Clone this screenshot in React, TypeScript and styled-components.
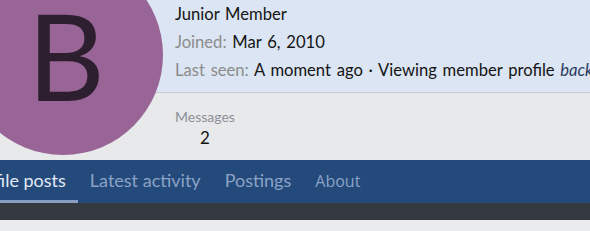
import styled, { createGlobalStyle } from 'styled-components';

const GlobalStyle = createGlobalStyle`
  html, body {
    margin: 0;
    padding: 0;
    background: #ebecee;
    font-family: Lato, "Noto Sans", sans-serif;
    overflow: hidden;
  }
`;

const Page = styled.div`
  width: 590px;
  height: 231px;
  overflow: hidden;
  background: #ebecee;
`;

const Header = styled.div`
  display: grid;
  grid-template-columns: 175px 1fr;
  grid-template-rows: auto auto;
  background: #e8e9eb;
`;

const InfoBand = styled.div`
  grid-column: 1 / -1;
  grid-row: 1;
  background: #dbe5f3;
  border-bottom: 1px solid #c9cdd3;
  padding: 0 0 8px 175px;
  white-space: nowrap;
`;

const StatsBand = styled.div`
  grid-column: 1 / -1;
  grid-row: 2;
  height: 67px;
  padding: 15px 0 0 175px;
  box-sizing: border-box;
  display: flex;
  gap: 24px;
`;

const Avatar = styled.div`
  grid-column: 1;
  grid-row: 1 / 3;
  align-self: start;
  z-index: 1;
  width: 200px;
  height: 200px;
  margin: -45px 0 0 -37px;
  padding-left: 6px;
  box-sizing: border-box;
  border-radius: 50%;
  background: #996596;
  color: #2e1f30;
  display: flex;
  align-items: center;
  justify-content: center;
  font-size: 120px;
  line-height: 1;
`;

const Line = styled.div`
  font-size: 16.6px;
  line-height: 28px;
  word-spacing: 1.5px;
  color: #141414;
`;

const Label = styled.span`
  color: #8c8c8c;
`;

const Em = styled.em`
  color: #2a3b62;
`;

const Stat = styled.dl`
  margin: 0;
  text-align: center;
`;

const StatTitle = styled.dt`
  font-size: 14px;
  line-height: 18px;
  color: #8c9097;
`;

const StatValue = styled.dd`
  margin: 1px 0 0;
  font-size: 17px;
  line-height: 22px;
  color: #141414;
`;

const Tabs = styled.nav`
  display: flex;
  height: 43px;
  margin-left: -44px;
  background: #244a7b;
`;

const Tab = styled.a<{ $active?: boolean; $alt?: boolean }>`
  display: block;
  padding: ${(p) => (p.$alt ? '9px 12px 0' : '8px 12px 0')};
  font-size: ${(p) => (p.$alt ? '16px' : '18px')};
  line-height: 24px;
  white-space: nowrap;
  font-family: ${(p) => (p.$alt ? '"Open Sans", sans-serif' : 'inherit')};
  color: ${(p) => (p.$active ? '#e2e9f5' : '#8ba2c6')};
  border-bottom: 3px solid ${(p) => (p.$active ? '#8a9dc3' : 'transparent')};
  box-sizing: border-box;
  height: 43px;
`;

const Shelf = styled.div`
  height: 17px;
  background: #353a41;
`;

export default function App() {
  return (
    <Page>
      <GlobalStyle />
      <Header>
        <InfoBand>
          <Line>Junior Member</Line>
          <Line>
            <Label>Joined:</Label> Mar 6, 2010
          </Line>
          <Line>
            <Label>Last seen:</Label> A moment ago · Viewing member profile <Em>backbencher</Em>
          </Line>
        </InfoBand>
        <Avatar>B</Avatar>
        <StatsBand>
          <Stat>
            <StatTitle>Messages</StatTitle>
            <StatValue>2</StatValue>
          </Stat>
        </StatsBand>
      </Header>
      <Tabs>
        <Tab $active>Profile posts</Tab>
        <Tab>Latest activity</Tab>
        <Tab>Postings</Tab>
        <Tab $alt>About</Tab>
      </Tabs>
      <Shelf />
    </Page>
  );
}
